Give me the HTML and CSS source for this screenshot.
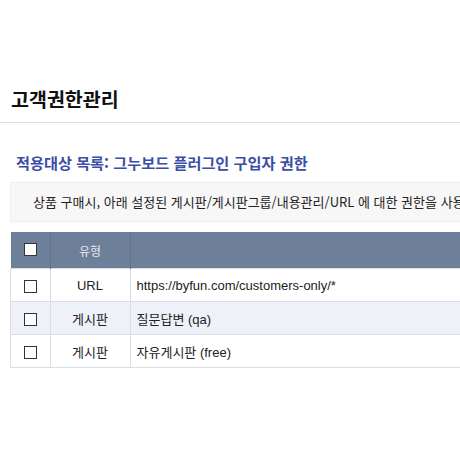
FILE: index.html
```html
<!DOCTYPE html>
<html lang="ko">
<head>
  <meta charset="UTF-8">
  <title>고객권한관리</title>
  <link rel="stylesheet" href="styles.css">
</head>
<body>
  <header class="page-head">
    <h1>고객권한관리</h1>
  </header>

  <section class="content">
    <h2 class="sub-title">적용대상 목록: 그누보드 플러그인 구입자 권한</h2>
    <div class="info-box">상품 구매시, 아래 설정된 게시판/게시판그룹/내용관리/URL 에 대한 권한을 사용자에게 부여합니다.</div>

    <table class="target-list">
      <thead>
        <tr><th class="chk"><input type="checkbox"></th><th class="type">유형</th><th></th></tr>
      </thead>
      <tbody>
        <tr><td class="chk"><input type="checkbox"></td><td class="type">URL</td><td>https://byfun.com/customers-only/*</td></tr>
        <tr><td class="chk"><input type="checkbox"></td><td class="type">게시판</td><td>질문답변 (qa)</td></tr>
        <tr><td class="chk"><input type="checkbox"></td><td class="type">게시판</td><td>자유게시판 (free)</td></tr>
      </tbody>
    </table>
  </section>
</body>
</html>
```

FILE: styles.css
```css
html, body { overflow: hidden; }
body { margin: 0; font-family: "Liberation Sans", "Noto Sans CJK KR", sans-serif; font-size: 13px; color: #222; background: #fff; }
.page-head { padding: 84px 11px 0; height: 38px; border-bottom: 1px solid #ddd; }
.page-head h1 { margin: 0; font-family: "Noto Sans CJK KR", sans-serif; font-size: 19.5px; font-weight: bold; line-height: 30px; color: #111; }
.content { padding: 0 10px; width: 700px; }
.sub-title { margin: 28px 0 0 6px; font-family: "Noto Sans CJK KR", sans-serif; font-size: 15.2px; font-weight: bold; line-height: 22px; color: #3b4da6; }
.info-box { margin-top: 9px; height: 38px; line-height: 38px; padding: 0 22px; background: #f7f7f7; border: 1px solid #eeeeee; white-space: nowrap; font-family: "Noto Sans CJK KR", sans-serif; }
.target-list { width: 100%; margin-top: 10px; border-collapse: collapse; table-layout: fixed; }
.target-list th { height: 36px; padding: 0; background: #6e7f99; color: #e6e9ef; font-weight: normal; font-size: 12px; border-right: 1px solid #63728a; vertical-align: middle; font-family: "Noto Sans CJK KR", sans-serif; }
.target-list td { height: 32px; padding: 0 6px; border: 1px solid #d8dde8; }
.target-list tbody tr:nth-child(2) td { background: #eef1f8; }
.target-list .chk { width: 39px; text-align: center; padding: 0; }
.target-list .type { width: 79px; text-align: center; padding: 0; }
.target-list input[type=checkbox] { appearance: none; width: 13px; height: 13px; margin: 0; border: 1px solid #333; background: #fff; vertical-align: middle; }
.target-list th input[type=checkbox] { margin-top: -6px; }
```
